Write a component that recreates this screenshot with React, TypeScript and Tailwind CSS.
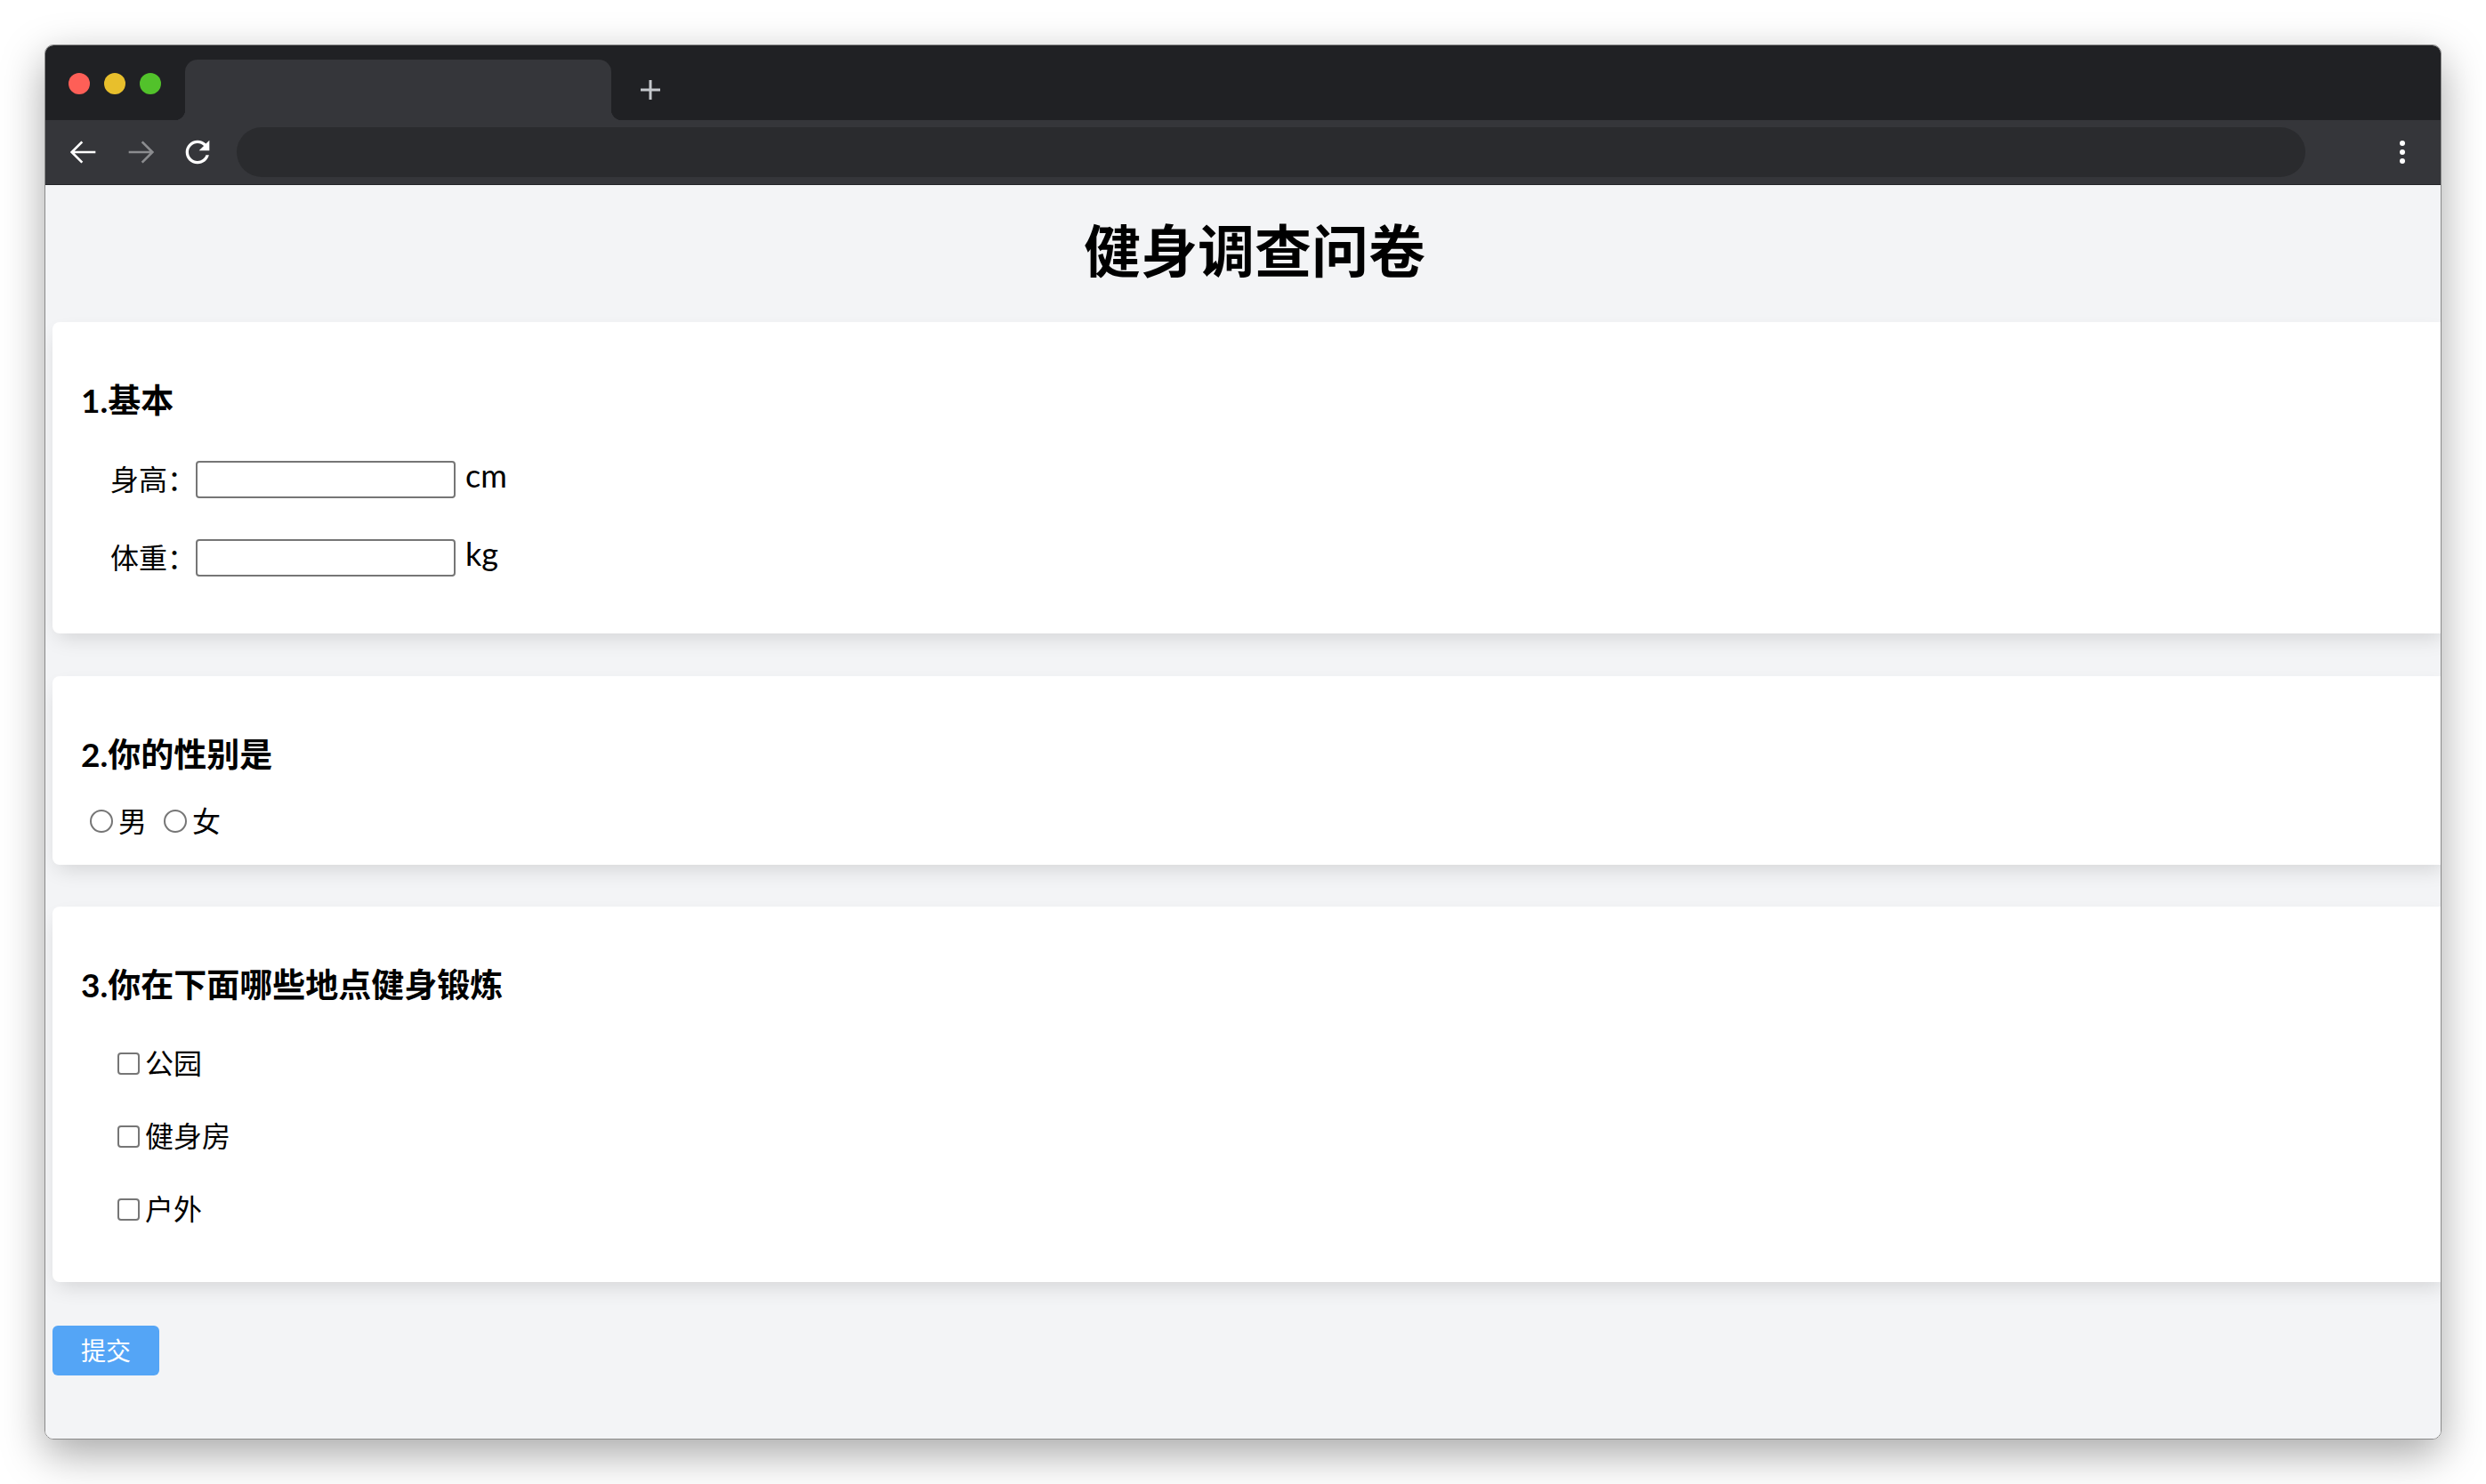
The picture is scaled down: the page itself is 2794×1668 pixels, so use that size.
import React from "react";

const Radio = ({ label }: { label: string }) => {
  return (
    <label className="flex items-center">
      <input
        type="radio"
        name="sex"
        className="ml-[10px] h-[26px] w-[26px] appearance-none rounded-full border-2 border-[#767676] bg-white"
      />
      <span className="ml-[6px]">{label}</span>
    </label>
  );
};

const Check = ({ label }: { label: string }) => {
  return (
    <label className="flex h-[40px] items-center">
      <input
        type="checkbox"
        className="h-[25px] w-[25px] appearance-none rounded-[4px] border-2 border-[#767676] bg-white"
      />
      <span className="ml-[6px]">{label}</span>
    </label>
  );
};

const Field = ({ label, unit }: { label: string; unit: string }) => {
  return (
    <div className="flex h-[42px] items-center">
      <span>{label}</span>
      <input
        type="text"
        className="h-[42px] w-[292px] rounded-[4px] border-2 border-[#767676] bg-white outline-none"
      />
      <span className="mb-[10px] ml-[11px] text-[36px]">{unit}</span>
    </div>
  );
};

export default function App() {
  return (
    <div className="h-[1668px] w-full bg-white p-[50px] font-['Lato','Noto_Sans_CJK_SC',sans-serif] text-[32px] text-black">
      <div className="flex h-full flex-col overflow-hidden rounded-[10px] border border-[#8a8a8a] shadow-[0_16px_48px_rgba(0,0,0,0.35)]">
        {/* title bar */}
        <div className="flex h-[84px] shrink-0 bg-[#202124]">
          <div className="ml-[26px] mt-[31px] flex gap-[16px] self-start">
            <div className="h-[24px] w-[24px] rounded-full bg-[#fe5f57]" />
            <div className="h-[24px] w-[24px] rounded-full bg-[#e8bf2c]" />
            <div className="h-[24px] w-[24px] rounded-full bg-[#52c22b]" />
          </div>
          <div className="relative ml-[27px] h-[68px] w-[479px] self-end rounded-t-[14px] bg-[#35363a]">
            <div className="absolute bottom-0 -left-[12px] h-[12px] w-[12px] bg-[radial-gradient(circle_at_0_0,transparent_12px,#35363a_12.5px)]" />
            <div className="absolute bottom-0 -right-[12px] h-[12px] w-[12px] bg-[radial-gradient(circle_at_100%_0,transparent_12px,#35363a_12.5px)]" />
          </div>
          <svg width="24" height="24" viewBox="0 0 24 24" className="ml-[32px] mt-[38px]">
            <path d="M12 1v22M1 12h22" stroke="#c4c7cb" strokeWidth="3" />
          </svg>
        </div>
        {/* toolbar */}
        <div className="flex h-[73px] shrink-0 items-center gap-[24px] border-b border-[#232427] bg-[#35363a] pl-[23px] pr-[40px]">
          <svg width="40" height="40" viewBox="0 0 24 24" fill="none">
            <path d="M20 12H4.6M11 5l-7 7 7 7" stroke="#ffffff" strokeWidth="1.6" />
          </svg>
          <svg width="40" height="40" viewBox="0 0 24 24" fill="none">
            <path d="M4 12h15.4M13 5l7 7-7 7" stroke="#8b8c8f" strokeWidth="1.6" />
          </svg>
          <svg width="40" height="40" viewBox="0 0 24 24">
            <path
              fill="#ffffff"
              d="M17.65 6.35C16.2 4.9 14.21 4 12 4c-4.42 0-7.99 3.58-7.99 8s3.57 8 7.99 8c3.73 0 6.84-2.55 7.73-6h-2.08c-.82 2.33-3.04 4-5.65 4-3.31 0-6-2.69-6-6s2.690-6 6-6c1.66 0 3.14.69 4.22 1.78L13 11h7V4l-2.35 2.35z"
            />
          </svg>
          <div className="mr-[82px] h-[56px] flex-1 rounded-full bg-[#2a2b2e]" />
          <div className="flex w-[6px] flex-col gap-[4px]">
            <div className="h-[6px] w-[6px] rounded-full bg-white" />
            <div className="h-[6px] w-[6px] rounded-full bg-white" />
            <div className="h-[6px] w-[6px] rounded-full bg-white" />
          </div>
        </div>
        {/* page */}
        <div className="flex-1 overflow-hidden bg-[#f3f4f6]">
          <div className="ml-[8px] w-full">
            <h1 className="pb-[48px] pl-[10px] pt-[42px] text-center text-[64px] font-bold leading-[64px]">
              健身调查问卷
            </h1>

            <div className="w-full rounded-lg bg-white pb-[64px] pl-[32px] pt-[62px] shadow-[0_10px_24px_-6px_rgba(0,0,0,0.14)]">
              <h3 className="text-[37px] font-bold leading-[52px]">1.基本</h3>
              <div className="mt-[42px] flex flex-col gap-[46px] pl-[33px]">
                <Field label="身高：" unit="cm" />
                <Field label="体重：" unit="kg" />
              </div>
            </div>

            <div className="mt-[48px] w-full rounded-lg bg-white pb-[29px] pl-[32px] pt-[62px] shadow-[0_10px_24px_-6px_rgba(0,0,0,0.14)]">
              <h3 className="text-[37px] font-bold leading-[52px]">2.你的性别是</h3>
              <div className="mt-[29px] flex h-[40px] items-center gap-[9px]">
                <Radio label="男" />
                <Radio label="女" />
              </div>
            </div>

            <div className="mt-[47px] w-full rounded-lg bg-white pb-[62px] pl-[32px] pt-[62px] shadow-[0_10px_24px_-6px_rgba(0,0,0,0.14)]">
              <h3 className="text-[37px] font-bold leading-[52px]">3.你在下面哪些地点健身锻炼</h3>
              <div className="mt-[42px] flex flex-col gap-[42px] pl-[41px]">
                <Check label="公园" />
                <Check label="健身房" />
                <Check label="户外" />
              </div>
            </div>

            <button className="mt-[49px] h-[56px] w-[120px] rounded-[6px] bg-[#54a5f6] text-[28px] text-white">
              提交
            </button>
          </div>
        </div>
      </div>
    </div>
  );
}
